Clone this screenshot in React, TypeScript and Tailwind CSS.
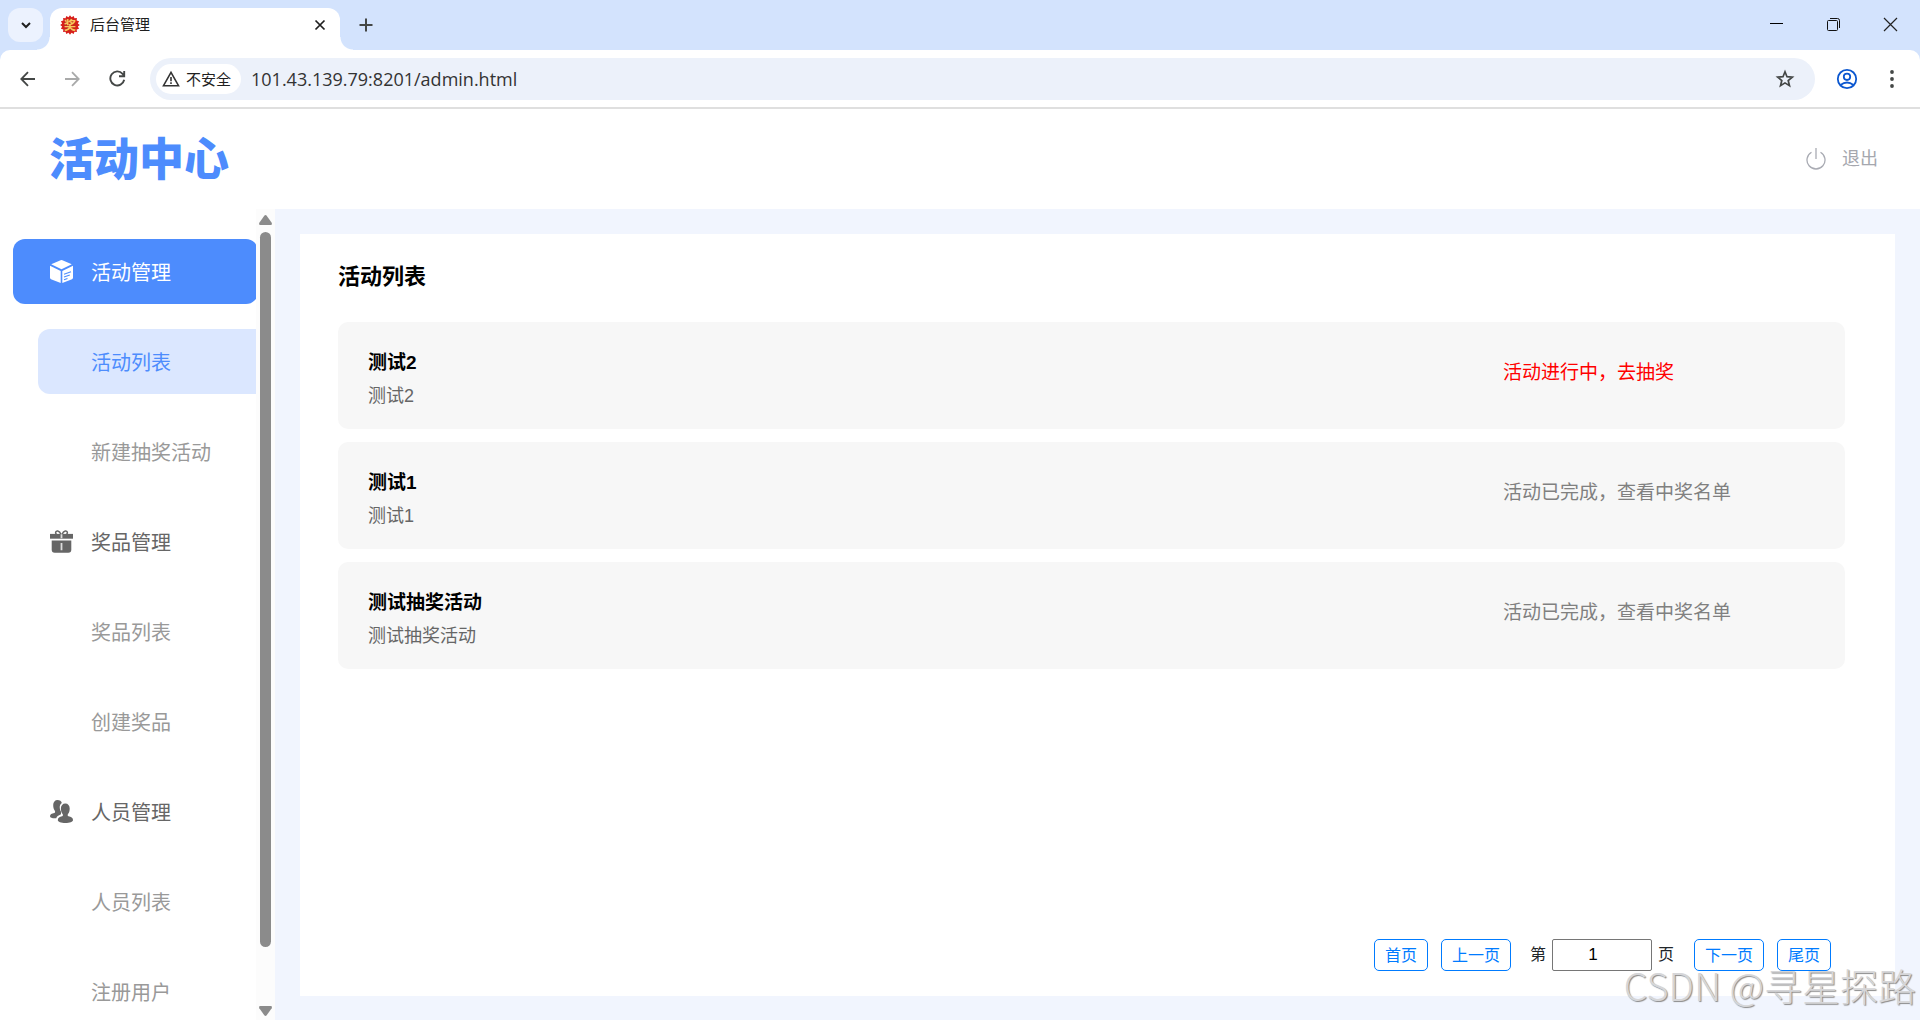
import React, { useState } from "react";

const FONT = "font-['Liberation_Sans','Noto_Sans_CJK_SC',sans-serif]";

function Favicon() {
  const points = Array.from({ length: 32 }, (_, i) => {
    const r = i % 2 ? 8 : 9.8;
    const a = (i * Math.PI) / 16;
    return `${10 + r * Math.sin(a)},${10 - r * Math.cos(a)}`;
  }).join(" ");
  return (
    <svg className="size-5 shrink-0" viewBox="0 0 20 20" aria-hidden="true">
      <polygon points={points} fill="#d8201c" />
      <circle cx="10" cy="10" r="6.4" fill="#c8261a" />
      <text x="10" y="14.5" textAnchor="middle" fontSize="12" fontWeight="700" fill="#f8c860">
        奖
      </text>
    </svg>
  );
}

function BoxIcon() {
  return (
    <svg className="size-[23px] shrink-0" viewBox="0 0 23 23" fill="#fff" aria-hidden="true">
      <path d="M10.6.3a2 2 0 0 1 1.8 0L21.8 4.2 11.5 9.3 1.2 4.2Z" />
      <path d="M0 5.8 10.7 11v12L1 19.2Q0 18.8 0 17.8Z" />
      <path d="M23 5.8 12.3 11v12L22 19.2Q23 18.8 23 17.8Z" />
      <path
        d="M14 14.3 21 11.8M14 17 19.8 15M14 19.8l3.5-1.3"
        stroke="#4d8cfd"
        strokeWidth="1.1"
        fill="none"
      />
    </svg>
  );
}

function GiftIcon() {
  return (
    <svg className="size-[23px] shrink-0" viewBox="0 0 23 23" fill="#666" aria-hidden="true">
      <path
        d="M11 4.5C9.5.3 5.800.2 5.600 2.800L6.300 4.500M12 4.500c1.500-4.200 5.200-4.300 5.400-1.700L16.700 4.500"
        fill="none"
        stroke="#666"
        strokeWidth="1.5"
      />
      <path d="M0 3.900h23v4.800H0Z" />
      <path d="M1.700 10.600h19.600v9.200q0 3-3 3H4.700q-3 0-3-3Z" />
      <path d="M11.500 4.300v4M11.500 13v7.300" stroke="#ddd" strokeWidth="1.8" fill="none" />
    </svg>
  );
}

function PeopleIcon() {
  return (
    <svg className="size-[23px] shrink-0" viewBox="0 0 23 23" fill="#666" aria-hidden="true">
      <path d="M7.500 0c2.200 0 4 1.200 4.300 3-1.700 1.200-2.300 3-2 5.300.2 1.500.600 2.500 1.200 3.400v2.600l-3.300 1.600c-.8.500-1.200 1.300-1.400 2.400-3.200.3-6.300-.3-6.300-2 0-2.300 1.800-2.400 4.300-3.300.9-.4 1.100-1.500.5-2.300C3.700 9.200 3.200 7.400 3.200 5 3.200 2 5 0 7.500 0Z" />
      <path d="M15.300 3.400c2.700 0 4.400 2 4.400 5 0 2.400-.6 4.200-1.700 5.500-.6.800-.4 2 .5 2.400 2.600.9 4.500 1.300 4.500 3.700 0 2-3.300 3-7.600 3S7.800 22 7.800 20c0-2.400 1.900-2.800 4.300-3.700.9-.4 1.100-1.600.5-2.400-1.100-1.300-1.700-3.100-1.700-5.500 0-3 1.700-5 4.400-5Z" />
    </svg>
  );
}

type Entry = { label: string; kind: "group" | "sub"; active?: boolean; icon?: React.ReactNode };

const MENU: Entry[] = [
  { label: "活动管理", kind: "group", active: true, icon: <BoxIcon /> },
  { label: "活动列表", kind: "sub", active: true },
  { label: "新建抽奖活动", kind: "sub" },
  { label: "奖品管理", kind: "group", icon: <GiftIcon /> },
  { label: "奖品列表", kind: "sub" },
  { label: "创建奖品", kind: "sub" },
  { label: "人员管理", kind: "group", icon: <PeopleIcon /> },
  { label: "人员列表", kind: "sub" },
  { label: "注册用户", kind: "sub" },
];

const ACTIVITIES = [
  { name: "测试2", desc: "测试2", running: true },
  { name: "测试1", desc: "测试1", running: false },
  { name: "测试抽奖活动", desc: "测试抽奖活动", running: false },
];

function MenuItem({ item }: { item: Entry }) {
  if (item.kind === "group") {
    return (
      <a
        href="#"
        className={`flex h-[65px] w-[245px] shrink-0 items-center gap-[18px] rounded-xl pl-[37px] ${
          item.active ? "bg-[#4d8cfd] text-white" : "text-[#666]"
        }`}
      >
        {item.icon}
        <span className="pt-[2px]">{item.label}</span>
      </a>
    );
  }
  return (
    <a
      href="#"
      className={`ml-[25px] flex h-[65px] w-[245px] shrink-0 items-center rounded-xl pl-[53px] ${
        item.active ? "bg-[#dbe7ff] text-[#4d8cfd]" : "text-[#999]"
      }`}
    >
      <span className="pt-[2px]">{item.label}</span>
    </a>
  );
}

function TabStrip() {
  return (
    <div className="flex h-[50px] justify-between">
      <div className="flex h-full">
        <button
          aria-label="搜索标签页"
          className="mt-2 ml-2 flex h-[34px] w-[35px] items-center justify-center rounded-xl bg-[#ecf2fe]"
        >
          <svg className="h-[7px] w-[10px]" viewBox="0 0 10 7" fill="none" stroke="#1f1f1f" strokeWidth="2" aria-hidden="true">
            <path d="m1 1 4 4 4-4" />
          </svg>
        </button>
        <div className="relative mt-2 ml-[7px] flex h-[42px] w-[290px] items-center rounded-t-xl bg-white pr-[14px] pb-2 pl-[10px]">
          <span className="absolute bottom-0 -left-[13px] size-[13px] bg-[radial-gradient(circle_at_0_0,transparent_12px,white_13px)]" />
          <span className="absolute -right-[13px] bottom-0 size-[13px] bg-[radial-gradient(circle_at_100%_0,transparent_12px,white_13px)]" />
          <Favicon />
          <span className="ml-[10px] flex-1 text-[15px] text-[#1f1f1f]">后台管理</span>
          <button aria-label="关闭标签页">
            <svg className="size-3" viewBox="0 0 12 12" stroke="#1f1f1f" strokeWidth="1.7" aria-hidden="true">
              <path d="m1.500 1.500 9 9M10.500 1.500l-9 9" />
            </svg>
          </button>
        </div>
        <button aria-label="新标签页" className="ml-[19px]">
          <svg className="size-[14px]" viewBox="0 0 14 14" stroke="#444746" strokeWidth="2" aria-hidden="true">
            <path d="M7 .500v13M.500 7h13" />
          </svg>
        </button>
      </div>
      <div className="flex h-12 items-center gap-[42px] pr-[22px]">
        <button aria-label="最小化">
          <svg className="h-[15px] w-[15px]" viewBox="0 0 15 15" stroke="#000" aria-hidden="true">
            <path d="M1 6.500h13" />
          </svg>
        </button>
        <button aria-label="还原">
          <svg className="size-[15px]" viewBox="0 0 15 15" fill="none" stroke="#111" aria-hidden="true">
            <rect x="1.5" y="3.5" width="10" height="10" rx="1" />
            <path d="M4 1.500h7.500a2 2 0 0 1 2 2V11" />
          </svg>
        </button>
        <button aria-label="关闭">
          <svg className="size-[15px]" viewBox="0 0 15 15" stroke="#222" strokeWidth="1.2" aria-hidden="true">
            <path d="m1 1 13 13M14 1 1 14" />
          </svg>
        </button>
      </div>
    </div>
  );
}

function Toolbar() {
  return (
    <div className="flex h-[59px] items-center rounded-t-[10px] border-b-2 border-[#dfdfdf] bg-white pl-5">
      <button aria-label="后退">
        <svg className="size-4" viewBox="0 0 16 16" fill="none" stroke="#444746" strokeWidth="1.8" aria-hidden="true">
          <path d="M15 8H1.500M8 1.200 1.300 8 8 14.800" />
        </svg>
      </button>
      <button aria-label="前进" className="ml-7" disabled>
        <svg className="size-4" viewBox="0 0 16 16" fill="none" stroke="#a9aaaa" strokeWidth="1.8" aria-hidden="true">
          <path d="M1 8h13.500M8 1.200 14.700 8 8 14.800" />
        </svg>
      </button>
      <button aria-label="重新加载" className="ml-[29px]">
        <svg className="size-[17px]" viewBox="0 0 17 17" fill="none" stroke="#444746" strokeWidth="1.9" aria-hidden="true">
          <path d="M15.200 9.800A7 7 0 1 1 13.600 3.800L15 5.400M15.200 1v5.200H10" />
        </svg>
      </button>
      <div className="ml-6 flex h-[42px] flex-1 items-center rounded-full bg-[#ecf1fa] pr-5 pl-[6px]">
        <button className="flex h-[30px] items-center gap-[6px] rounded-full bg-white pr-[10px] pl-[6px] text-[15px] text-[#1f1f1f]">
          <svg className="size-[18px]" viewBox="0 0 18 18" fill="none" stroke="#333" strokeWidth="1.6" aria-hidden="true">
            <path d="M9 2.400 1.500 15.700h15ZM9 7v4.200M9 12.300v1.700" />
          </svg>
          <span className="pt-[3px]">不安全</span>
        </button>
        <input
          aria-label="地址"
          className="ml-[10px] h-8 min-w-0 flex-1 bg-transparent font-['Open_Sans',sans-serif] text-[18px] text-[#333] outline-none"
          defaultValue="101.43.139.79:8201/admin.html"
        />
        <button aria-label="收藏">
          <svg className="size-5" viewBox="0 0 20 20" fill="none" stroke="#444746" strokeWidth="1.7" aria-hidden="true">
            <path d="m10 2.800 2 4.900 5.300.4-4.100 3.400 1.300 5.200-4.500-2.800-4.500 2.800 1.300-5.200L2.700 8.100 8 7.700Z" />
          </svg>
        </button>
      </div>
      <button aria-label="个人资料" className="ml-[21px]">
        <svg className="size-[22px]" viewBox="0 0 22 22" fill="none" stroke="#0b57d0" strokeWidth="1.8" aria-hidden="true">
          <circle cx="11" cy="11" r="9.2" />
          <circle cx="11" cy="8.8" r="3.2" />
          <path d="M4.500 17q6.500-5 13 0" />
        </svg>
      </button>
      <button aria-label="菜单" className="mr-5 ml-[26px]">
        <svg className="h-[18px] w-4" viewBox="0 0 16 18" fill="#444746" aria-hidden="true">
          <circle cx="8" cy="2" r="1.9" />
          <circle cx="8" cy="9" r="1.9" />
          <circle cx="8" cy="16" r="1.9" />
        </svg>
      </button>
    </div>
  );
}

function PageButton({ children }: { children: React.ReactNode }) {
  return (
    <button className="h-8 rounded-[5px] border border-[#007bff] bg-white px-[10px] pt-px text-[#007bff]">{children}</button>
  );
}

function Scrollbar() {
  return (
    <div className="flex w-[19px] flex-col items-center bg-[#fcfcfc] pt-[6px] pb-1" aria-hidden="true">
      <svg className="h-[10px] w-[13px]" viewBox="0 0 13 10" fill="#8b8b8b">
        <path d="M5.300.800q1.200-1.400 2.400 0l5 7q.8 2.200-1 2.200H1.300Q-.5 10 .3 7.800Z" />
      </svg>
      <div className="mt-[7px] mb-[59px] w-[11px] flex-1 rounded-full bg-[#8b8b8b]" />
      <svg className="h-[10px] w-[13px]" viewBox="0 0 13 10" fill="#8b8b8b">
        <path d="M5.300 9.200q1.200 1.400 2.400 0l5-7Q13.500 0 11.700 0H1.300Q-.5 0 .3 2.200Z" />
      </svg>
    </div>
  );
}

export default function App() {
  const [page, setPage] = useState("1");
  return (
    <div className={`relative flex h-screen flex-col overflow-hidden bg-white ${FONT}`}>
      <div className="shrink-0 bg-[#d3e3fd]">
        <TabStrip />
        <Toolbar />
      </div>

      <header className="flex h-[100px] shrink-0 items-center justify-between pr-[42px] pl-[49px]">
        <h1 className="pt-[2px] text-[45px] leading-none font-black text-[#4d8cfd]">活动中心</h1>
        <button className="flex items-center gap-4 text-[18px] text-[#a5a7ae]">
          <svg className="h-[22px] w-5" viewBox="0 0 20 22" fill="none" stroke="#a9abb3" strokeWidth="1.3" aria-hidden="true">
            <path d="M10 0v11M5.500 4.200a9 9 0 1 0 9 0" />
          </svg>
          <span>退出</span>
        </button>
      </header>

      <div className="flex min-h-0 flex-1">
        <aside className="flex w-[275px] shrink-0">
          <nav className="flex w-64 flex-col gap-[25px] overflow-hidden pt-[30px] pl-[13px] text-xl">
            {MENU.map((item) => (
              <MenuItem key={item.label} item={item} />
            ))}
          </nav>
          <Scrollbar />
        </aside>

        <main className="flex min-w-0 flex-1 bg-[#f1f5fe] px-[25px] pt-[25px] pb-6">
          <section className="flex flex-1 flex-col bg-white pr-[50px] pb-[25px] pl-[38px]">
            <h2 className="pt-[27px] pb-[29px] text-[22px] leading-8 font-bold text-black">活动列表</h2>
            <ul className="flex flex-col gap-[13px]">
              {ACTIVITIES.map((a) => (
                <li key={a.name} className="flex h-[107px] items-start justify-between rounded-[10px] bg-[#f7f7f7] pl-[30px]">
                  <div className="pt-[27px]">
                    <h3 className="text-[19px] leading-7 font-bold text-black">{a.name}</h3>
                    <p className="mt-[5px] text-[18px] leading-7 text-[#666]">{a.desc}</p>
                  </div>
                  <div className="w-[342px] pt-[37px] text-[19px] leading-7">
                    {a.running ? (
                      <a href="#" className="text-[#ff0000]">活动进行中，去抽奖</a>
                    ) : (
                      <a href="#" className="text-[#808080]">活动已完成，查看中奖名单</a>
                    )}
                  </div>
                </li>
              ))}
            </ul>
            <div className="mt-auto flex items-center justify-end gap-[13px] pr-[14px] text-base">
              <PageButton>首页</PageButton>
              <PageButton>上一页</PageButton>
              <label className="mr-[7px] ml-[6px] flex items-center gap-[6px] text-[#212529]">
                第
                <input
                  className="h-8 w-[100px] rounded-[2px] border border-[#767676] bg-white pr-[18px] text-center text-[17px] text-black"
                  value={page}
                  onChange={(e) => setPage(e.target.value)}
                />
                页
              </label>
              <PageButton>下一页</PageButton>
              <PageButton>尾页</PageButton>
            </div>
          </section>
        </main>
      </div>

      <div className="pointer-events-none absolute right-1 bottom-4 font-['Noto_Sans_CJK_SC',sans-serif] text-[38px] leading-none font-light whitespace-nowrap text-[#d6d6d8] [text-shadow:1px_1px_1px_#8a8a8a]">
        CSDN @寻星探路
      </div>
    </div>
  );
}
